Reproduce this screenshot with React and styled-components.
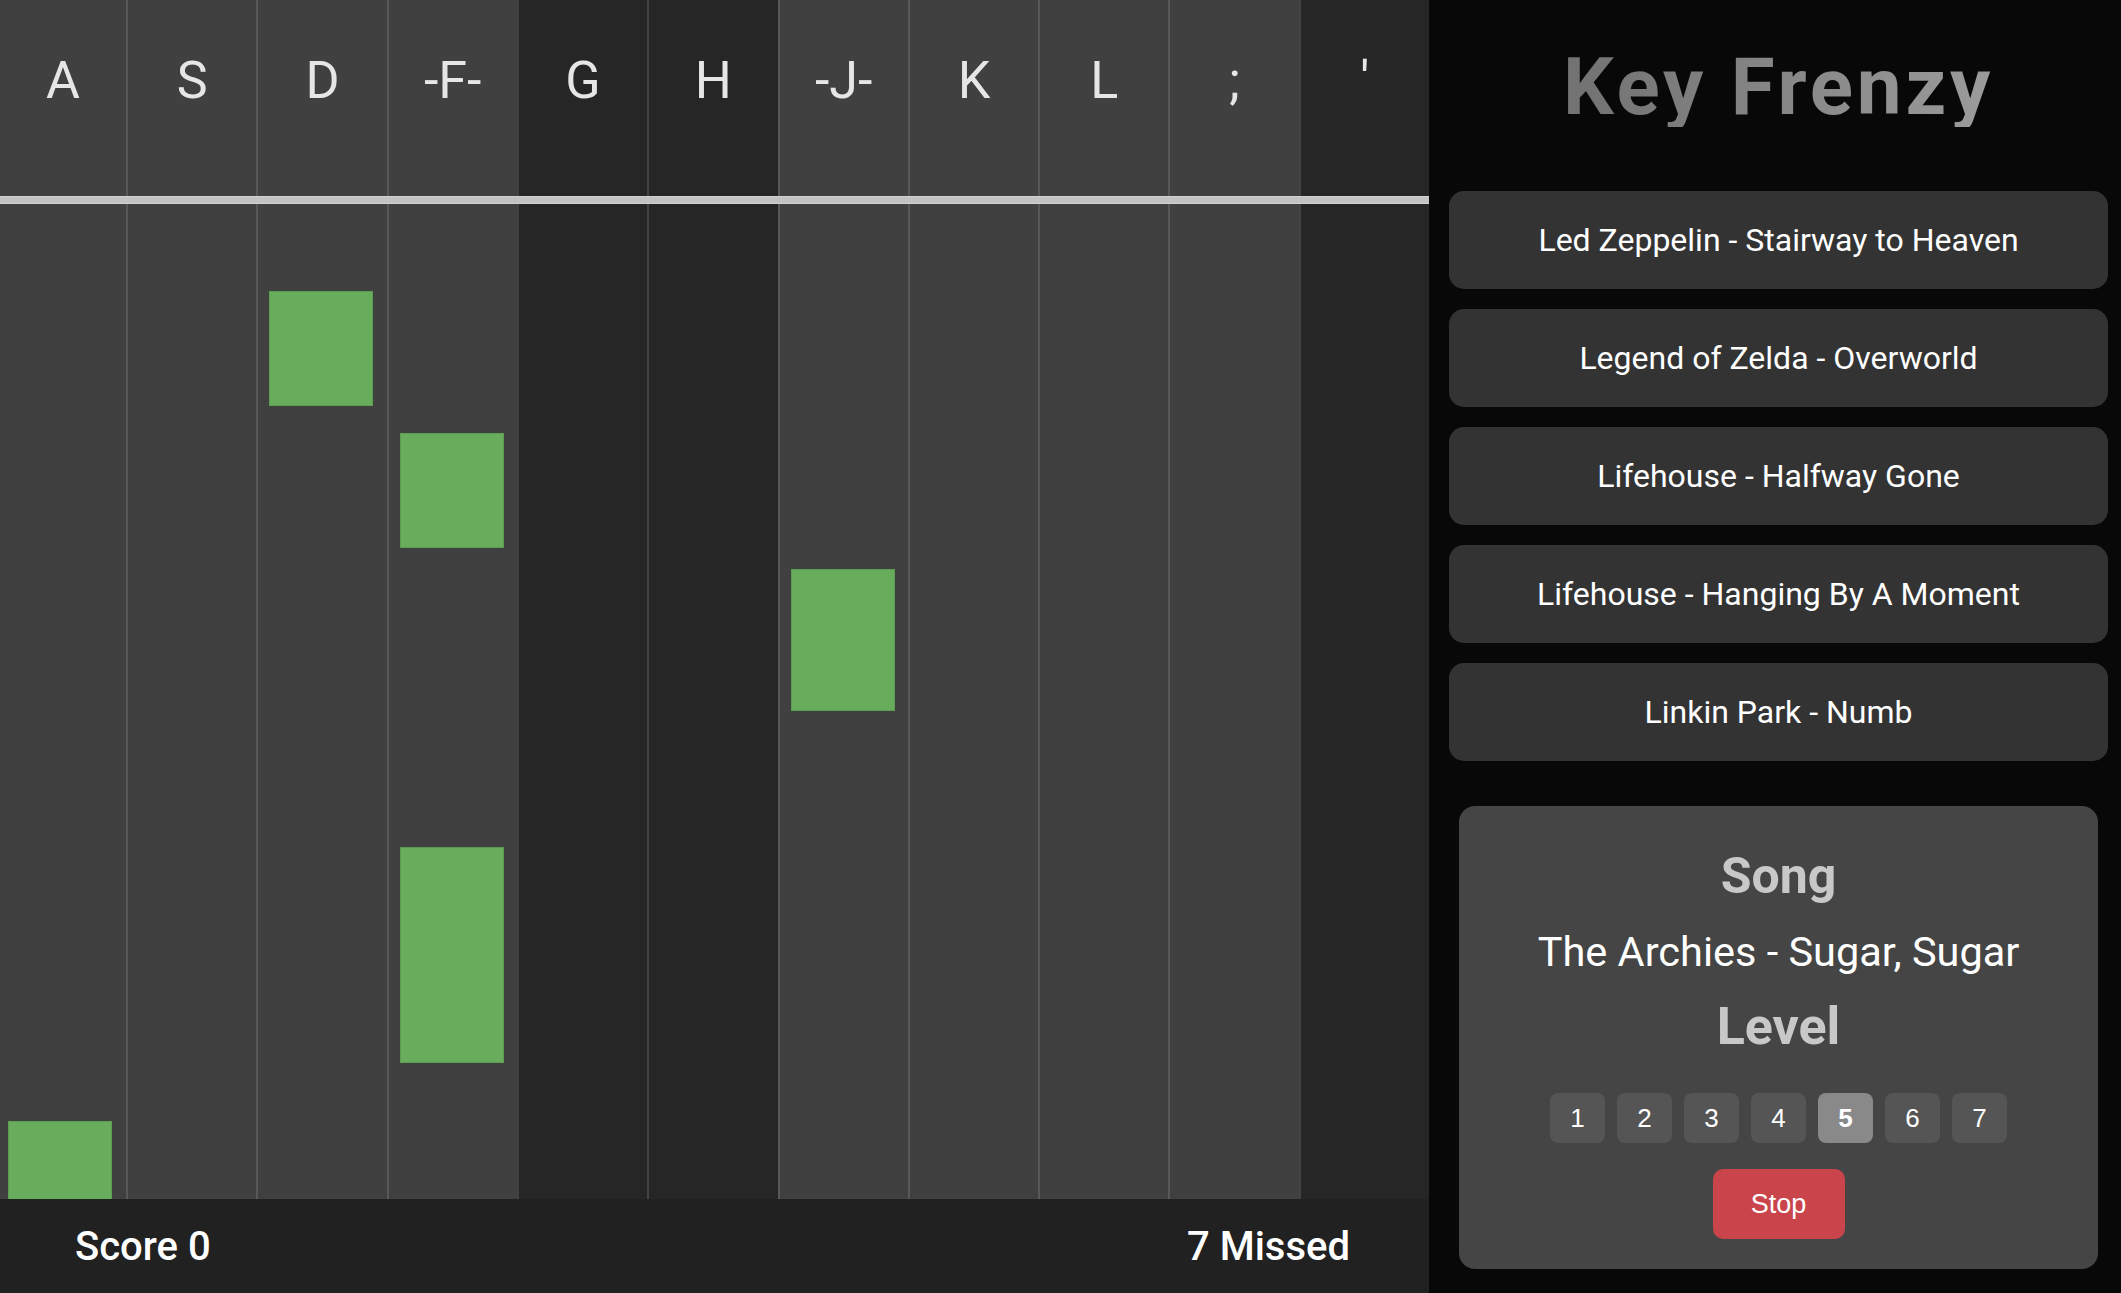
import React from "react";
import styled, { createGlobalStyle } from "styled-components";

const GlobalStyle = createGlobalStyle`
  html, body { margin: 0; padding: 0; background: #080808; }
  body { font-family: Roboto, "Liberation Sans", sans-serif; }
  * { box-sizing: border-box; }
`;

const Page = styled.div`
  display: flex;
  width: 2121px;
  height: 1293px;
  overflow: hidden;
  background: #080808;
`;

const Game = styled.div`
  width: 1429px;
  flex: none;
  display: flex;
  flex-direction: column;
`;

const Board = styled.div`
  position: relative;
  flex: 1;
  display: grid;
  grid-template-columns: 126px repeat(10, 1fr);
  overflow: hidden;
`;

const Lane = styled.div`
  position: relative;
  background: ${(p) => (p.$dark ? "#262626" : "#404040")};
  border-left: ${(p) => (p.$first ? "none" : "2px solid rgba(255,255,255,0.13)")};
  overflow: hidden;
`;

const KeyLabel = styled.div`
  height: 196px;
  padding-top: 55px;
  text-align: center;
  font-family: Roboto, sans-serif;
  font-size: 52px;
  line-height: 52px;
  color: #e6e6e6;
`;

const Note = styled.div`
  position: absolute;
  left: ${(p) => (p.$first ? 8 : 11)}px;
  width: 104px;
  background: #67ad5b;
  border: 1px solid #5d9d52;
`;

const HitLine = styled.div`
  position: absolute;
  left: 0;
  right: 0;
  top: 196px;
  height: 8px;
  background: #c3c3c3;
  border-top: 1px solid #d2d2d2;
  border-bottom: 1px solid #d2d2d2;
`;

const Footer = styled.div`
  height: 94px;
  flex: none;
  background: #212121;
  display: flex;
  align-items: center;
  justify-content: space-between;
  padding: 0 79px 0 75px;
  color: #fff;
  font-family: Roboto, sans-serif;
  font-weight: 500;
  font-size: 40px;
`;

const Sidebar = styled.div`
  flex: 1;
  display: flex;
  flex-direction: column;
  padding: 0 13px 0 20px;
  background: #080808;
`;

const Title = styled.h1`
  margin: 47px 0 0;
  height: 80px;
  font-family: Roboto, sans-serif;
  font-weight: 700;
  font-size: 80px;
  line-height: 80px;
  letter-spacing: 3.8px;
  text-align: center;
  background: linear-gradient(90deg, #737373 20%, #9d9d9d 85%);
  -webkit-background-clip: text;
  background-clip: text;
  color: transparent;
`;

const SongList = styled.div`
  margin-top: 64px;
  display: flex;
  flex-direction: column;
  gap: 20px;
`;

const SongButton = styled.button`
  height: 98px;
  border: none;
  border-radius: 15px;
  background: #333333;
  color: #ffffff;
  font-family: Roboto, sans-serif;
  font-size: 32px;
  font-weight: 400;
  cursor: pointer;
`;

const Panel = styled.div`
  margin: 45px 10px 0;
  padding: 45px 0 30px;
  background: #454545;
  border-radius: 16px;
  display: flex;
  flex-direction: column;
  align-items: center;
`;

const Heading = styled.div`
  font-family: Roboto, sans-serif;
  font-weight: 700;
  font-size: ${(p) => p.$size}px;
  line-height: ${(p) => p.$size}px;
  color: #c8c8c8;
  margin-top: ${(p) => p.$mt || 0}px;
`;

const SongName = styled.div`
  margin-top: 30px;
  font-family: Roboto, sans-serif;
  font-size: 41.5px;
  line-height: 42px;
  color: #ffffff;
`;

const Levels = styled.div`
  margin-top: 40px;
  display: flex;
  gap: 12px;
`;

const LevelBox = styled.button`
  width: 55px;
  height: 50px;
  border: none;
  border-radius: 8px;
  background: ${(p) => (p.$active ? "#898989" : "#555555")};
  color: #ffffff;
  font-family: "Liberation Sans", Arial, sans-serif;
  font-size: 26px;
  font-weight: ${(p) => (p.$active ? 700 : 400)};
  padding: 0;
`;

const StopButton = styled.button`
  margin-top: 26px;
  width: 132px;
  height: 70px;
  border: none;
  border-radius: 10px;
  background: #c9444b;
  color: #ffffff;
  font-family: "Liberation Sans", Arial, sans-serif;
  font-size: 27px;
  padding: 0;
`;

const keys = ["A", "S", "D", "-F-", "G", "H", "-J-", "K", "L", ";", "'"];
const darkLanes = [4, 5, 10];
const notes = [
  { lane: 2, top: 291, height: 115 },
  { lane: 3, top: 433, height: 115 },
  { lane: 6, top: 569, height: 142 },
  { lane: 3, top: 847, height: 216 },
  { lane: 0, top: 1121, height: 110 },
];
const songs = [
  "Led Zeppelin - Stairway to Heaven",
  "Legend of Zelda - Overworld",
  "Lifehouse - Halfway Gone",
  "Lifehouse - Hanging By A Moment",
  "Linkin Park - Numb",
];

export default function App() {
  return (
    <>
      <GlobalStyle />
      <Page>
        <Game>
          <Board>
            {keys.map((k, i) => (
              <Lane key={k} $dark={darkLanes.includes(i)} $first={i === 0}>
                <KeyLabel>{k}</KeyLabel>
                {notes
                  .filter((n) => n.lane === i)
                  .map((n, j) => (
                    <Note key={j} $first={i === 0} style={{ top: n.top, height: n.height }} />
                  ))}
              </Lane>
            ))}
            <HitLine />
          </Board>
          <Footer>
            <span>Score 0</span>
            <span>7 Missed</span>
          </Footer>
        </Game>
        <Sidebar>
          <Title>Key Frenzy</Title>
          <SongList>
            {songs.map((s) => (
              <SongButton key={s}>{s}</SongButton>
            ))}
          </SongList>
          <Panel>
            <Heading $size={50}>Song</Heading>
            <SongName>The Archies - Sugar, Sugar</SongName>
            <Heading $size={52} $mt={28}>Level</Heading>
            <Levels>
              {[1, 2, 3, 4, 5, 6, 7].map((n) => (
                <LevelBox key={n} $active={n === 5}>
                  {n}
                </LevelBox>
              ))}
            </Levels>
            <StopButton>Stop</StopButton>
          </Panel>
        </Sidebar>
      </Page>
    </>
  );
}
